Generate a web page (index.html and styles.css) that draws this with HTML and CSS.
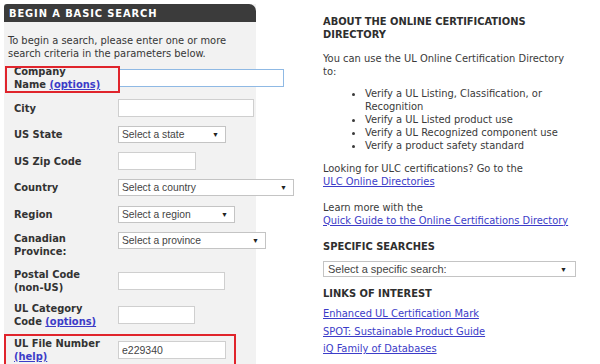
FILE: index.html
```html
<!DOCTYPE html>
<html>
<head>
<meta charset="utf-8">
<link rel="stylesheet" href="styles.css">
</head>
<body>
<div class="page">
  <div class="panel">
    <div class="panel-head">BEGIN A BASIC SEARCH</div>
    <p class="intro">To begin a search, please enter one or more search criteria in the parameters below.</p>
    <div class="form">
      <div class="row two">
        <div class="label mark-label">Company<br>Name <a href="#">(options)</a></div>
        <div class="ctrl"><div class="input focus w166"></div></div>
      </div>
      <div class="row">
        <div class="label">City</div>
        <div class="ctrl"><div class="input w136"></div></div>
      </div>
      <div class="row">
        <div class="label">US State</div>
        <div class="ctrl"><div class="select w108"><span>Select a state</span><span class="arrow">▼</span></div></div>
      </div>
      <div class="row">
        <div class="label">US Zip Code</div>
        <div class="ctrl"><div class="input w78"></div></div>
      </div>
      <div class="row">
        <div class="label">Country</div>
        <div class="ctrl"><div class="select w176"><span>Select a country</span><span class="arrow">▼</span></div></div>
      </div>
      <div class="row">
        <div class="label">Region</div>
        <div class="ctrl"><div class="select w117"><span>Select a region</span><span class="arrow">▼</span></div></div>
      </div>
      <div class="row two">
        <div class="label">Canadian<br>Province:</div>
        <div class="ctrl top"><div class="select w148"><span>Select a province</span><span class="arrow">▼</span></div></div>
      </div>
      <div class="row two postal">
        <div class="label">Postal Code<br>(non-US)</div>
        <div class="ctrl"><div class="input w107"></div></div>
      </div>
      <div class="row two">
        <div class="label">UL Category<br>Code <a href="#">(options)</a></div>
        <div class="ctrl"><div class="input w77"></div></div>
      </div>
      <div class="row two mark-row">
        <div class="label">UL File Number<br><a href="#">(help)</a></div>
        <div class="ctrl"><div class="input w106 filled">e229340</div></div>
      </div>
    </div>
  </div>
  <div class="side">
    <h2 class="side-title">ABOUT THE ONLINE CERTIFICATIONS DIRECTORY</h2>
    <p class="side-text">You can use the UL Online Certification Directory to:</p>
    <ul class="uses">
      <li>Verify a UL Listing, Classification, or Recognition</li>
      <li>Verify a UL Listed product use</li>
      <li>Verify a UL Recognized component use</li>
      <li>Verify a product safety standard</li>
    </ul>
    <p class="side-text more">Looking for ULC certifications? Go to the<br><a href="#">ULC Online Directories</a><br><br>Learn more with the<br><a href="#">Quick Guide to the Online Certifications Directory</a></p>
    <h2 class="side-title spec">SPECIFIC SEARCHES</h2>
    <div class="select wide"><span>Select a specific search:</span><span class="arrow">▼</span></div>
    <h2 class="side-title links-title">LINKS OF INTEREST</h2>
    <div class="links">
      <a href="#">Enhanced UL Certification Mark</a>
      <a href="#">SPOT: Sustainable Product Guide</a>
      <a href="#">iQ Family of Databases</a>
    </div>
  </div>
</div>
</body>
</html>
```
FILE: styles.css
```css
html, body {
  margin: 0;
  padding: 0;
  background: #ffffff;
}
body {
  font-family: "DejaVu Sans Condensed", "DejaVu Sans", Verdana, sans-serif;
  font-size: 11px;
  color: #363636;
  overflow: hidden;
  height: 364px;
}
a {
  color: #3c3cc8;
  text-decoration: underline;
}
.page {
  display: flex;
  padding: 4px 0 0 4px;
}
.panel {
  width: 252px;
  height: 360px;
  background: #f2f2f2;
  flex: none;
}
.panel-head {
  height: 18px;
  line-height: 19px;
  background: #3b3b3b;
  color: #ffffff;
  font-weight: bold;
  padding-left: 5px;
  border-radius: 3px 7px 0 0;
  letter-spacing: 0.9px;
}
.intro {
  margin: 0;
  padding: 12px 4px 0 4px;
}
.form {
  display: flex;
  flex-direction: column;
  gap: 8.5px;
  margin-top: 4.8px;
  padding-left: 3px;
}
.row {
  display: grid;
  grid-template-columns: 111px 1fr;
  align-items: center;
  min-height: 18px;
}
.row.two {
  min-height: 26px;
}
.row.postal {
  margin-top: 1.5px;
}
.label {
  font-weight: bold;
  padding-left: 7px;
  color: #333;
  position: relative;
}
.label a {
  color: #3c3cc8;
}
.ctrl {
  display: flex;
  align-items: center;
}
.ctrl.top {
  align-self: start;
}
.input {
  height: 16px;
  border: 1px solid #cfcfcf;
  background: #ffffff;
  flex: none;
  box-sizing: content-box;
}
.input.focus {
  border-color: #8fb9e4;
}
.input.filled {
  font-family: "Liberation Sans", Arial, sans-serif;
  font-size: 10.5px;
  color: #444;
  line-height: 17px;
  padding-left: 3px;
  width: 103px;
}
.select {
  border: 1px solid #c4c4c4;
  background: #ffffff;
  display: flex;
  align-items: center;
  justify-content: space-between;
  padding: 0 6px 0 3px;
  font-family: "Liberation Sans", Arial, sans-serif;
  font-size: 10.3px;
  color: #444;
  flex: none;
  box-sizing: border-box;
  height: 17px;
}
.select .arrow {
  font-size: 7px;
  color: #222;
}
.w166 { width: 164px; }
.w136 { width: 134px; }
.w78 { width: 76px; }
.w77 { width: 75px; }
.w107 { width: 105px; }
.w106 { width: 104px; }
.w108 { width: 108px; }
.w176 { width: 176px; }
.w117 { width: 117px; }
.w148 { width: 148px; }

.mark-label::after {
  content: "";
  position: absolute;
  left: -2px;
  right: -2px;
  top: 1px;
  bottom: -2px;
  border: 2px solid #e0242c;
}
.mark-row {
  position: relative;
}
.mark-row::after {
  content: "";
  position: absolute;
  left: -3px;
  width: 228px;
  top: -3px;
  height: 40px;
  border: 2px solid #e0242c;
}

.side {
  margin-left: 67px;
  width: 270px;
  color: #3a3a3a;
}
.side-title {
  margin: 10.6px 0 0 0;
  font-size: 11px;
  font-weight: bold;
  color: #2e2e2e;
  width: 230px;
}
.side-text {
  margin: 11px 0 0 0;
  width: 250px;
}
.uses {
  margin: 9px 0 0 0;
  padding-left: 42px;
  list-style: disc;
}
.side-text.more {
  margin-top: 10px;
  width: 270px;
}
.side-title.spec {
  margin-top: 13px;
}
.select.wide {
  width: 253px;
  height: 16px;
  margin-top: 8.5px;
  font-size: 11px;
  padding-right: 8px;
  padding-left: 4px;
}
.side-title.links-title {
  margin-top: 10px;
}
.links {
  margin-top: 5px;
  display: flex;
  flex-direction: column;
  align-items: flex-start;
}
.links a {
  line-height: 17.5px;
}
```
